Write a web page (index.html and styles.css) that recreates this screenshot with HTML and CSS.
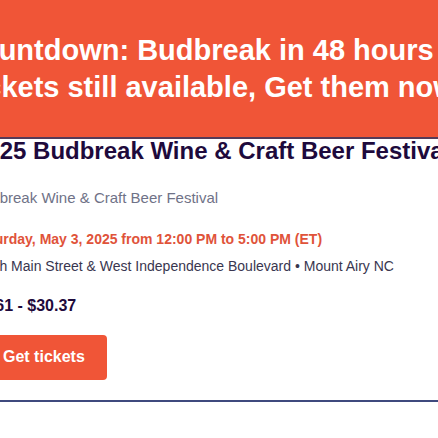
FILE: index.html
```html
<!DOCTYPE html>
<html lang="en">
<head>
<meta charset="utf-8">
<title>2025 Budbreak Wine &amp; Craft Beer Festival</title>
<link rel="stylesheet" href="styles.css">
</head>
<body>
<div class="page">
  <header class="banner">
    <p class="banner-line">Countdown: Budbreak in 48 hours</p>
    <p class="banner-line">Tickets still available, Get them now!</p>
  </header>
  <main class="event">
    <h1 class="title">2025 Budbreak Wine &amp; Craft Beer Festival</h1>
    <p class="organizer">Budbreak Wine &amp; Craft Beer Festival</p>
    <p class="date">Saturday, May 3, 2025 from 12:00 PM to 5:00 PM (ET)</p>
    <p class="location">North Main Street &amp; West Independence Boulevard • Mount Airy NC</p>
    <p class="price">$1.61 - $30.37</p>
    <a class="btn" href="#">Get tickets</a>
  </main>
  <hr class="divider">
</div>
</body>
</html>
```

FILE: styles.css
```css
html, body {
  margin: 0;
  padding: 0;
  overflow: hidden;
  background: #ffffff;
}

body {
  font-family: "Liberation Sans", Arial, Helvetica, sans-serif;
  color: #1e0a3c;
}

.page {
  width: 760px;
  margin-left: -40px;
  white-space: nowrap;
}

.banner {
  background: #f05537;
  padding: 32px 0 31px 0;
  border-bottom: 2px solid #553a58;
}

.banner-line {
  margin: 0;
  font-size: 29px;
  line-height: 37px;
  font-weight: 700;
  color: #ffffff;
}

.event {
  padding-left: 13px;
  display: flex;
  flex-direction: column;
  align-items: flex-start;
}

.title {
  margin: 0 0 25px 0;
  font-size: 24px;
  line-height: 24px;
  font-weight: 700;
  color: #1e0a3c;
}

.organizer {
  margin: 0 0 21px 0;
  font-size: 15px;
  line-height: 20px;
  color: #6f7287;
}

.date {
  margin: 0 0 7px 0;
  font-size: 14px;
  line-height: 20px;
  font-weight: 700;
  color: #e0533a;
}

.location {
  margin: 0 0 20px 0;
  font-size: 14px;
  line-height: 20px;
  color: #39364f;
}

.price {
  margin: 0 0 19px 0;
  font-size: 16px;
  line-height: 20px;
  font-weight: 700;
  color: #1e0a3c;
}

.btn {
  display: block;
  height: 45px;
  box-sizing: border-box;
  padding: 0 22px 1px 30px;
  line-height: 44px;
  font-size: 16px;
  font-weight: 700;
  color: #ffffff;
  background: #f05537;
  border-radius: 4px;
  text-decoration: none;
}

.divider {
  margin: 20px 0 0 0;
  border: 0;
  height: 2px;
  background: #3f4a7e;
}
```
